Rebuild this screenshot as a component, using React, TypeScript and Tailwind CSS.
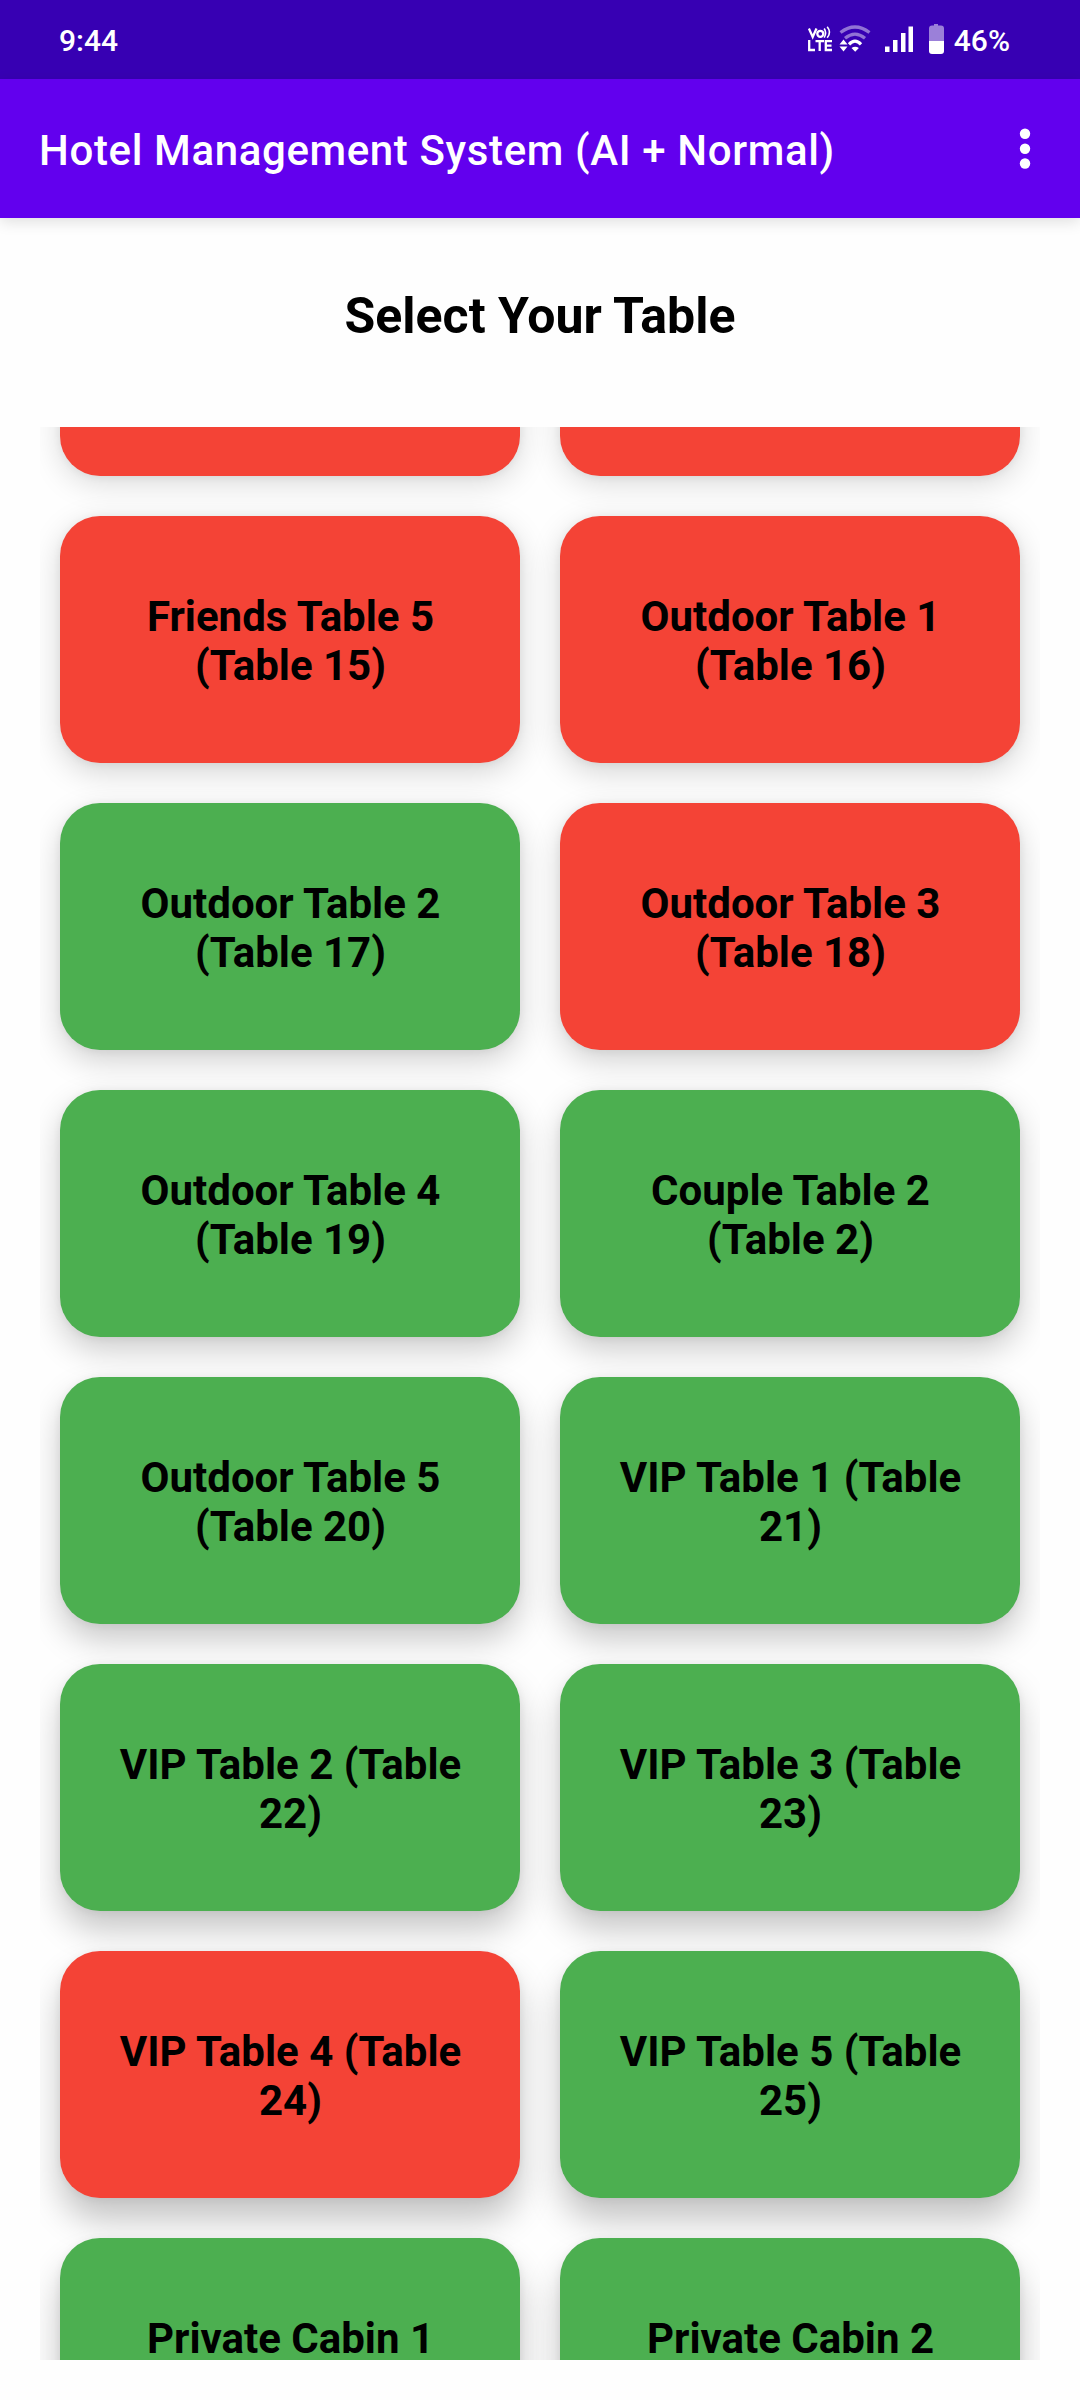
const RED = "bg-[#f44336]";
const GREEN = "bg-[#4caf50]";

type Table = { id: number; name: string; busy?: boolean };

// Shadows deepen towards the bottom of the screen, as with an overhead light.
const rows: { shadow: string; tables: [Table, Table] }[] = [
  { shadow: "shadow-[0_7px_31px_rgba(0,0,0,0.15),0_1px_8px_rgba(0,0,0,0.06)]", tables: [{ id: 13, name: "", busy: true }, { id: 14, name: "", busy: true }] },
  { shadow: "shadow-[0_9px_31px_rgba(0,0,0,0.17),0_1px_8px_rgba(0,0,0,0.06)]", tables: [{ id: 15, name: "Friends Table 5 (Table 15)", busy: true }, { id: 16, name: "Outdoor Table 1 (Table 16)", busy: true }] },
  { shadow: "shadow-[0_11px_31px_rgba(0,0,0,0.18),0_1px_8px_rgba(0,0,0,0.06)]", tables: [{ id: 17, name: "Outdoor Table 2 (Table 17)" }, { id: 18, name: "Outdoor Table 3 (Table 18)", busy: true }] },
  { shadow: "shadow-[0_13px_32px_rgba(0,0,0,0.2),0_1px_8px_rgba(0,0,0,0.06)]", tables: [{ id: 19, name: "Outdoor Table 4 (Table 19)" }, { id: 2, name: "Couple Table 2 (Table 2)" }] },
  { shadow: "shadow-[0_16px_32px_rgba(0,0,0,0.21),0_1px_8px_rgba(0,0,0,0.06)]", tables: [{ id: 20, name: "Outdoor Table 5 (Table 20)" }, { id: 21, name: "VIP Table 1 (Table 21)" }] },
  { shadow: "shadow-[0_19px_33px_rgba(0,0,0,0.22),0_1px_8px_rgba(0,0,0,0.06)]", tables: [{ id: 22, name: "VIP Table 2 (Table 22)" }, { id: 23, name: "VIP Table 3 (Table 23)" }] },
  { shadow: "shadow-[0_22px_34px_rgba(0,0,0,0.23),0_1px_8px_rgba(0,0,0,0.06)]", tables: [{ id: 24, name: "VIP Table 4 (Table 24)", busy: true }, { id: 25, name: "VIP Table 5 (Table 25)" }] },
  { shadow: "shadow-[0_24px_34px_rgba(0,0,0,0.24),0_1px_8px_rgba(0,0,0,0.06)]", tables: [{ id: 26, name: "Private Cabin 1 (Table 26)" }, { id: 27, name: "Private Cabin 2 (Table 27)" }] },
];

function StatusIcons() {
  return (
    <svg width="140" height="40" viewBox="0 0 140 40" fill="none" className="block">
      {/* VoLTE */}
      <g stroke="#fff" strokeWidth="2.3">
        <path d="M.9 9.500 4.700 18 8.500 9.500" />
        <circle cx="12.300" cy="14.800" r="3" />
        <path d="M16.200 9.500q2.800 4.200 0 9.200M19.200 7.800q4.600 5.600 0 10.900" strokeWidth="1.600" />
        <path d="M1.200 21v10H7M7.500 22.200H16M11.700 22.200V32M24 22.200h-6.200v8.800H24M18 26.600h5.500" />
      </g>
      {/* Wi-Fi */}
      <g stroke="#fff" strokeWidth="3.200">
        <path d="M32.500 13.500Q47 2.500 61.500 13.500" opacity=".45" />
        <path d="M37 19.300Q47 11 57 19.300" opacity=".45" />
        <path d="M41 25.300Q47 19 53 25.300" />
      </g>
      <path d="M43.500 29q3.700-2.600 7.400 0L47.200 32.800zM31.500 25.500l4-5 4 5zM31.500 27.500l4 5 4-5z" fill="#fff" />
      {/* Mobile signal */}
      <path d="M77 27.500h4.500V33H77zM85 21h4.500v12H85zM93 14h4.500v19H93zM100.500 7.500h4.500V33h-4.500z" fill="#fff" />
      {/* Battery */}
      <path d="M126 5h4v1.500h3q3 0 3 3V22h-15V9.500q0-3 3-3h2z" fill="#fff" opacity=".5" />
      <path d="M121 22h15v10q0 3-3 3h-9q-3 0-3-3z" fill="#fff" />
    </svg>
  );
}

export default function App() {
  return (
    <div className="flex h-[2400px] w-[1080px] flex-col overflow-hidden bg-[#fefefe] font-[Roboto,sans-serif] text-black">
      <div className="flex h-[79px] shrink-0 items-start bg-[#3700b3] pl-[59px] text-[30px] leading-[36px] font-medium text-white">
        <span className="mt-[23px]">9:44</span>
        <div className="mt-[19px] ml-auto">
          <StatusIcons />
        </div>
        <span className="mt-[23px] mr-[70px] ml-[6px]">46%</span>
      </div>
      <header className="relative flex h-[139px] shrink-0 items-center justify-between bg-[#6200ee] pr-[49px] pl-[39px] text-white shadow-[0_4px_14px_rgba(0,0,0,0.12)]">
        <h1 className="mt-[5px] text-[42px] leading-[50px] font-medium tracking-[0.63px] whitespace-nowrap">Hotel Management System (AI + Normal)</h1>
        <svg width="12" height="44" viewBox="0 0 12 44" fill="#fff">
          <circle cx="6" cy="6.700" r="5.200" />
          <circle cx="6" cy="21.700" r="5.200" />
          <circle cx="6" cy="36.500" r="5.200" />
        </svg>
      </header>
      <h2 className="mt-[68px] h-[141px] shrink-0 text-center text-[50px] leading-[60px] font-bold">Select Your Table</h2>
      <main className="mx-10 flex h-[1933px] shrink-0 flex-col overflow-hidden px-5">
        <div className="-mt-[198px] flex flex-col gap-10">
          {rows.map((row) => (
            <div key={row.tables[0].id} className="grid shrink-0 grid-cols-2 gap-10">
              {row.tables.map((t) => (
                <div
                  key={t.id}
                  className={`flex h-[247px] items-center justify-center rounded-[40px] pt-[2px] pr-[49px] pl-[50px] text-center text-[42px] leading-[49px] font-bold ${row.shadow} ${t.busy ? RED : GREEN}`}
                >
                  {t.name}
                </div>
              ))}
            </div>
          ))}
        </div>
      </main>
    </div>
  );
}
